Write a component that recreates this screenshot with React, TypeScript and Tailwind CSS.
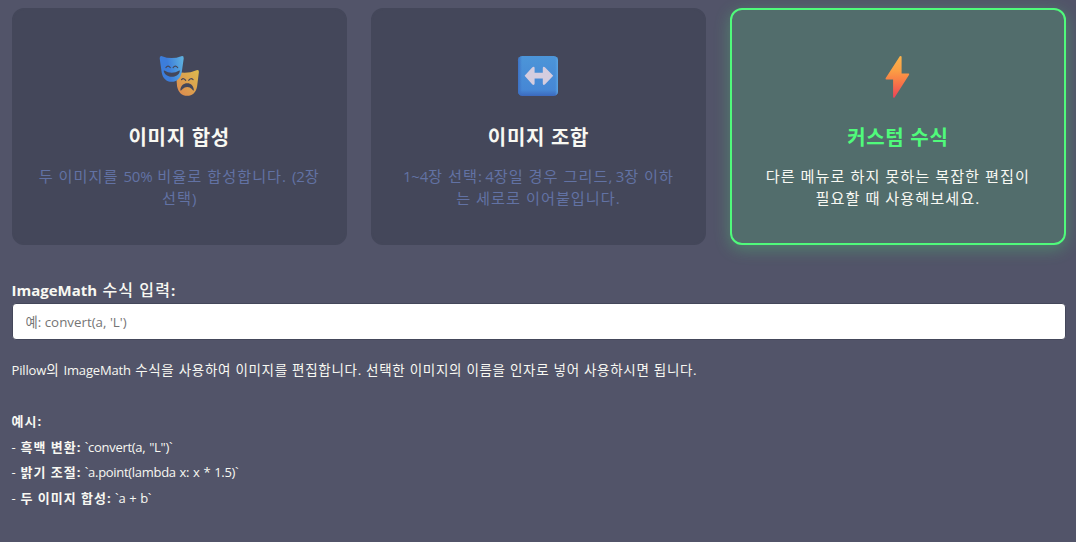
import { useState } from "react";

const MasksIcon = () => (
  <svg width="42" height="42" viewBox="-0.5 0 42 42" className="block">
    <defs>
      <linearGradient id="mask-sad" x1="0" y1="1" x2="1" y2="0">
        <stop offset="0" stopColor="#dc864f" />
        <stop offset="1" stopColor="#dcbb4e" />
      </linearGradient>
      <linearGradient id="mask-happy" x1="0" y1="0.2" x2="1" y2="0">
        <stop offset="0.3" stopColor="#3c7ddb" />
        <stop offset="1" stopColor="#61b5df" />
      </linearGradient>
    </defs>
    <path d="M18.8 16.8Q28.3 19.5 38 15.2Q40.6 14.2 40.4 17L38.6 31.5C37.6 37.5 33.8 40.8 28.7 40.8C23.5 40.8 19.8 37.5 18.6 31.5L17.4 18Z" fill="url(#mask-sad)" />
    <path d="M23 24.6Q25 22.4 27.2 25.4M30.2 25.4Q32.2 22.4 34.6 24.6" fill="none" stroke="#44475a" strokeWidth="1.1" strokeLinecap="round" />
    <path d="M21.8 35.2C22.2 30.4 25 28.2 28.8 28.2C32.4 28.2 35 30.4 35.4 35.2C34.6 37 33.4 32 28.8 32C24 32 22.8 37 21.8 35.2Z" fill="#44475a" />
    <path d="M3.5 1.2Q13 5 22.8 1.2Q25.4 0.4 25.2 3.4L23.2 17.5C22 23.4 18.2 26.8 13.1 26.8C8 26.8 4.2 23.4 3.2 17.5L1.2 3.6Q1 0.4 3.5 1.2Z" fill="url(#mask-happy)" />
    <path d="M7.4 12.6Q9.5 9.6 11.8 12.6M14.6 12.6Q16.8 9.6 19.2 12.6" fill="none" stroke="#44475a" strokeWidth="1.1" strokeLinecap="round" />
    <path d="M5.8 15.6Q13.2 20 20.8 15.6C21.4 15.4 21.4 16.1 21.2 16.8C19.4 23.4 7.6 23.4 5.4 16.8C5.2 15.8 5.2 15.3 5.8 15.6Z" fill="#44475a" />
  </svg>
);

const ArrowsIcon = () => (
  <svg width="42" height="42" viewBox="0 0 42 42" className="block">
    <defs>
      <linearGradient id="arrow-tile" x1="0" y1="0" x2="0" y2="1">
        <stop offset="0" stopColor="#4c95d8" />
        <stop offset="0.85" stopColor="#4687d5" />
        <stop offset="1" stopColor="#3c69bd" />
      </linearGradient>
      <linearGradient id="arrow-edge" x1="0" y1="0" x2="1" y2="0">
        <stop offset="0" stopColor="#3c70c4" />
        <stop offset="0.1" stopColor="#3c70c4" stopOpacity="0" />
        <stop offset="0.93" stopColor="#5ba5e3" stopOpacity="0" />
        <stop offset="1" stopColor="#5ba5e3" />
      </linearGradient>
    </defs>
    <rect x="1" y="1" width="40" height="40" rx="4.5" fill="url(#arrow-tile)" />
    <rect x="1" y="1" width="40" height="40" rx="4.5" fill="url(#arrow-edge)" />
    <path d="M7.6 20.8L15.4 12.3Q17.5 11 17.6 13.1V17.8H25.8V13.1Q26 11 27.9 12.3L36.2 20.8L27.9 29.5Q25.9 30.7 25.8 28.6V23.6H17.6V28.6Q17.4 30.7 15.4 29.5Z" fill="#d5cddf" />
  </svg>
);

const BoltIcon = () => (
  <svg width="42" height="42" viewBox="0 -1 42 42" className="block overflow-visible">
    <defs>
      <linearGradient id="bolt" x1="0.5" y1="0" x2="0.5" y2="1">
        <stop offset="0" stopColor="#fcb34b" />
        <stop offset="0.35" stopColor="#fb9e44" />
        <stop offset="0.65" stopColor="#f87547" />
        <stop offset="1" stopColor="#ef4358" />
      </linearGradient>
    </defs>
    <path d="M22.8 0.3L8.6 22.2Q8.2 23.4 9.4 23.4H16.1V41.2Q16.5 42 17.6 41.4L32.1 18.8Q32.6 17.7 31.4 17.6H24.6V0.6Q23.7 -0.3 22.8 0.3Z" fill="url(#bolt)" />
  </svg>
);

type MixedTextProps = {
  text: string;
  hangul: string;
  latin?: string;
};

const MixedText = ({ text, hangul, latin = "" }: MixedTextProps) => (
  <>
    {text.split(/( ?[가-힣][가-힣 .]*)/).map((part, i) => (
      <span key={i} className={i % 2 === 1 ? hangul : latin}>
        {part}
      </span>
    ))}
  </>
);

const modes = [
  {
    id: "blend",
    icon: <MasksIcon />,
    title: "이미지 합성",
    lines: ["두 이미지를 50% 비율로 합성합니다. (2장", "선택)"],
  },
  {
    id: "combine",
    icon: <ArrowsIcon />,
    title: "이미지 조합",
    lines: ["1~4장 선택: 4장일 경우 그리드, 3장 이하", "는 세로로 이어붙입니다."],
  },
  {
    id: "custom",
    icon: <BoltIcon />,
    title: "커스텀 수식",
    lines: ["다른 메뉴로 하지 못하는 복잡한 편집이", "필요할 때 사용해보세요."],
  },
];

const examples = [
  { label: "흑백 변환:", code: '`convert(a, "L")`' },
  { label: "밝기 조절:", code: "`a.point(lambda x: x * 1.5)`" },
  { label: "두 이미지 합성:", code: "`a + b`" },
];

const App = () => {
  const [mode, setMode] = useState("custom");
  const [formula, setFormula] = useState("");

  return (
    <div className="h-[542px] overflow-hidden bg-[#525469] pt-2 pr-[10.5px] pl-[11.5px] font-['Open_Sans','Noto_Sans_CJK_KR',sans-serif] text-[#f8f8f2]">
      {/* Modes */}
      <div className="grid grid-cols-3 gap-6">
        {modes.map((item) => {
          const active = mode === item.id;
          return (
            <button
              key={item.id}
              onClick={() => setMode(item.id)}
              className={`flex h-[237px] flex-col items-center rounded-xl border-2 pt-[45px] ${
                active
                  ? "border-[#50fa7b] bg-[#526d6c] shadow-[0_4px_16px_rgba(80,250,123,0.3)]"
                  : "border-[#44475a] bg-[#44475a]"
              }`}
            >
              {item.icon}
              <h3
                className={`mt-[27px] text-[20px] leading-7 font-bold tracking-[0.7px] whitespace-nowrap ${
                  active ? "text-[#50fa7b]" : "text-[#f8f8f2]"
                }`}
              >
                {item.title}
              </h3>
              <p
                className={`mt-[13px] text-[15px] leading-[22px] whitespace-nowrap ${
                  active ? "text-[#f8f8f2]" : "text-[#6272a4]"
                }`}
              >
                {item.lines.map((line) => (
                  <span key={line} className="block">
                    <MixedText
                      text={line}
                      hangul="text-[15.2px] tracking-[1px]"
                      latin="tracking-[-0.2px]"
                    />
                  </span>
                ))}
              </p>
            </button>
          );
        })}
      </div>

      {/* Formula */}
      <label htmlFor="formula" className="mt-[33px] block h-[25px] text-[15px] leading-6 font-bold">
        <MixedText text="ImageMath 수식 입력:" hangul="text-[16px] font-medium tracking-[1.1px]" />
      </label>
      <input
        id="formula"
        type="text"
        value={formula}
        onChange={(e) => setFormula(e.target.value)}
        placeholder="예: convert(a, 'L')"
        className="block h-[37px] w-full rounded border border-[#44475a] bg-white px-[13px] text-[13.33px] text-black outline-none placeholder:text-[#757575]"
      />

      {/* Help */}
      <div className="mt-[18px] text-[13px] leading-[25.5px]">
        <p className="h-[25.5px] whitespace-nowrap">
          <MixedText
            text="Pillow의 ImageMath 수식을 사용하여 이미지를 편집합니다. 선택한 이미지의 이름을 인자로 넣어 사용하시면 됩니다."
            hangul="text-[13.5px] tracking-[0.7px]"
            latin="tracking-[-0.15px]"
          />
        </p>
        <p className="mt-[25.5px] h-[25.5px] font-bold tracking-[1px]">예시:</p>
        {examples.map((ex) => (
          <p key={ex.label} className="h-[25.5px]">
            <span className="tracking-[0.7px]">- </span>
            <b className="tracking-[1px]">{ex.label}</b>{" "}
            <span className="tracking-[-0.3px] [word-spacing:0.8px]">{ex.code}</span>
          </p>
        ))}
      </div>
    </div>
  );
};

export default App;
